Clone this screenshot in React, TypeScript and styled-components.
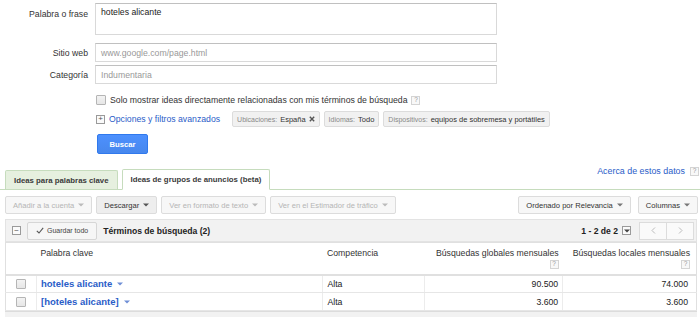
import React from 'react';
import styled, { createGlobalStyle } from 'styled-components';

const GlobalStyle = createGlobalStyle`
  body {
    margin: 0;
    background: #fff;
    font-family: "Liberation Sans", Arial, sans-serif;
    color: #222;
  }
`;

const Page = styled.div`
  width: 700px;
  height: 317px;
  overflow: hidden;
  font-size: 8.7px;
`;

const Form = styled.div`
  display: flex;
  flex-direction: column;
  padding-top: 3px;
`;

const FieldRow = styled.div<{ $top?: number; $align?: string }>`
  display: flex;
  align-items: ${p => p.$align || 'center'};
  gap: 7px;
  margin-top: ${p => p.$top || 0}px;
`;

const Label = styled.label<{ $pad?: number }>`
  width: 88px;
  text-align: right;
  color: #333;
  padding-top: ${p => p.$pad || 0}px;
  font-size: 8.7px;
`;

const Box = styled.div<{ $h: number; $muted?: boolean }>`
  box-sizing: border-box;
  width: 402px;
  height: ${p => p.$h}px;
  border: 1px solid #d9d9d9;
  border-top-color: #c0c0c0;
  padding: 3px 5px;
  color: ${p => (p.$muted ? '#999' : '#222')};
  font-size: 8.7px;
  display: flex;
  align-items: ${p => (p.$h > 25 ? 'flex-start' : 'center')};
`;

const OptionRow = styled.div<{ $top: number }>`
  display: flex;
  align-items: center;
  margin-left: 96px;
  margin-top: ${p => p.$top}px;
  gap: 4px;
  font-size: 8.7px;
  color: #333;
`;

const Check = styled.span<{ $size?: number }>`
  display: inline-block;
  box-sizing: border-box;
  width: ${p => p.$size || 10}px;
  height: ${p => p.$size || 10}px;
  border: 1px solid #b5b5b5;
  border-radius: 1px;
  background: linear-gradient(#f3f3f3, #e6e6e6);
  flex-shrink: 0;
`;

const Help = styled.span`
  display: inline-flex;
  align-items: center;
  justify-content: center;
  box-sizing: border-box;
  width: 9px;
  height: 9px;
  border: 1px solid #d4d4d4;
  background: #f8f8f8;
  color: #999;
  font-size: 6.5px;
  line-height: 1;
`;

const SquareIcon = styled.span<{ $gap?: number }>`
  display: inline-flex;
  align-items: center;
  justify-content: center;
  box-sizing: border-box;
  width: 9px;
  height: 9px;
  margin-left: ${p => p.$gap || 0}px;
  border: 1px solid #9a9a9a;
  background: #fafafa;
  color: #555;
  font-size: 8px;
  line-height: 1;
`;

const Link = styled.a<{ $size?: number; $bold?: boolean }>`
  color: #2a5dc8;
  text-decoration: none;
  font-size: ${p => p.$size || 8.7}px;
  font-weight: ${p => (p.$bold ? 'bold' : 'normal')};
`;

const Chips = styled.div`
  display: flex;
  gap: 4px;
  margin-left: 8px;
`;

const Chip = styled.span`
  display: inline-flex;
  align-items: center;
  gap: 3px;
  height: 16px;
  box-sizing: border-box;
  padding: 0 4px;
  background: #f1f1f1;
  border: 1px solid #dcdcdc;
  border-radius: 2px;
  font-size: 7px;
  color: #888;
  b {
    font-weight: normal;
    font-size: 7.5px;
    color: #333;
  }
`;

const SearchButton = styled.button`
  margin: 7px 0 0 97px;
  width: 51px;
  height: 20px;
  border: 1px solid #3079ed;
  border-radius: 2px;
  background: linear-gradient(#4d90fe, #4787ed);
  color: #fff;
  font-family: inherit;
  font-weight: bold;
  font-size: 7.7px;
  padding: 0;
`;

const TabBar = styled.div`
  display: flex;
  align-items: flex-end;
  margin-top: 15px;
  padding: 0 1px 0 5px;
  border-bottom: 1px solid #c6dcbd;
  height: 20px;
`;

const Tab = styled.div<{ $active?: boolean }>`
  box-sizing: border-box;
  height: ${p => (p.$active ? 21 : 19)}px;
  margin-bottom: ${p => (p.$active ? -1 : 0)}px;
  margin-right: 4px;
  padding: 0 8px;
  display: flex;
  align-items: center;
  font-size: 7.8px;
  font-weight: bold;
  color: #3a3a3a;
  border: 1px solid #c6dcbd;
  border-bottom: ${p => (p.$active ? '1px solid #fff' : 'none')};
  background: ${p => (p.$active ? '#fff' : '#e6f0df')};
  border-radius: 2px 2px 0 0;
`;

const AboutLink = styled.div`
  margin-left: auto;
  align-self: flex-start;
  margin-top: -3px;
  display: flex;
  align-items: center;
  gap: 5px;
`;

const Toolbar = styled.div`
  display: flex;
  align-items: center;
  gap: 4px;
  margin: 6px 2px 0 5px;
`;

const ToolButton = styled.button<{ $disabled?: boolean; $pressed?: boolean; $gap?: number }>`
  display: inline-flex;
  align-items: center;
  gap: 4px;
  height: 18px;
  padding: 0 7px;
  margin-left: ${p => p.$gap || 0}px;
  border: 1px solid #dcdcdc;
  border-radius: 2px;
  background: ${p => (p.$pressed ? '#eeeeee' : '#f7f7f7')};
  color: ${p => (p.$disabled ? '#b5b5b5' : '#333')};
  font-family: inherit;
  font-size: 7.6px;
`;

const Spacer = styled.div`
  flex: 1;
`;

const PanelHeader = styled.div`
  display: flex;
  align-items: center;
  margin: 5px 3px 0 5px;
  height: 23px;
  box-sizing: border-box;
  padding: 0 2px 0 6px;
  background: #f2f2f2;
  border: 1px solid #e3e3e3;
`;

const SaveButton = styled.button`
  display: inline-flex;
  align-items: center;
  gap: 3px;
  height: 18px;
  margin: 0 6px 0 6px;
  padding: 0 8px;
  border: 1px solid #d6d6d6;
  border-radius: 2px;
  background: #f6f6f6;
  color: #444;
  font-family: inherit;
  font-size: 7px;
`;

const Title = styled.span<{ $size?: number }>`
  font-weight: bold;
  font-size: ${p => p.$size || 8.6}px;
  color: #222;
`;

const Pager = styled.div`
  display: flex;
  margin-left: 9px;
`;

const PageButton = styled.button`
  display: inline-flex;
  align-items: center;
  justify-content: center;
  width: 28px;
  height: 18px;
  margin-left: -1px;
  border: 1px solid #dcdcdc;
  background: #fafafa;
  padding: 0;
`;

const Table = styled.table`
  border-collapse: collapse;
  margin-left: 5px;
  width: 692px;
  font-size: 8.7px;
`;

const Th = styled.th<{ $w: number; $num?: boolean }>`
  width: ${p => p.$w}px;
  height: 32px;
  box-sizing: border-box;
  padding: 5px 4px 0;
  vertical-align: top;
  text-align: ${p => (p.$num ? 'right' : 'left')};
  font-weight: normal;
  color: #333;
  border-bottom: 2px solid #e0e0e0;
  border-top: 1px solid #e0e0e0;
  &:first-child {
    border-left: 1px solid #e0e0e0;
  }
  &:last-child {
    border-right: 1px solid #e0e0e0;
    padding-right: 6px;
  }
`;

const HeadHelp = styled.div`
  display: flex;
  justify-content: flex-end;
  margin-top: 2px;
`;

const Td = styled.td<{ $num?: boolean; $line?: boolean }>`
  height: 18px;
  box-sizing: border-box;
  padding: 0 4px;
  text-align: ${p => (p.$num ? 'right' : 'left')};
  color: #222;
  border-bottom: 1px solid #e6e6e6;
  border-left: ${p => (p.$line ? '1px solid #ececec' : 'none')};
  &:first-child {
    border-left: 1px solid #e0e0e0;
    text-align: center;
  }
  &:last-child {
    border-right: 1px solid #e0e0e0;
    padding-right: 8px;
  }
`;

const KeywordCell = styled.span`
  display: inline-flex;
  align-items: center;
  gap: 5px;
`;

const Footer = styled.div`
  margin: 0 3px 0 5px;
  height: 10px;
  background: #f2f2f2;
  border-top: 1px solid #dcdcdc;
`;

const Caret = ({ color = '#777' }: { color?: string }) => (
  <svg width="6" height="4" viewBox="0 0 6 4">
    <path d="M0 0.5 L6 0.5 L3 3.5 Z" fill={color} />
  </svg>
);

const Chevron = ({ dir }: { dir: 'left' | 'right' }) => (
  <svg width="5" height="7" viewBox="0 0 5 7">
    <path
      d={dir === 'left' ? 'M4 0.5 L1 3.5 L4 6.5' : 'M1 0.5 L4 3.5 L1 6.5'}
      stroke="#bbb"
      strokeWidth="1"
      fill="none"
    />
  </svg>
);

const CheckMark = () => (
  <svg width="8" height="7" viewBox="0 0 8 7">
    <path d="M0.8 3.8 L3 6 L7.2 0.8" stroke="#555" strokeWidth="1.1" fill="none" />
  </svg>
);

const Cross = () => (
  <svg width="6" height="6" viewBox="0 0 6 6">
    <path d="M0.8 0.8 L5.2 5.2 M5.2 0.8 L0.8 5.2" stroke="#555" strokeWidth="1.4" />
  </svg>
);

const rows = [
  { kw: 'hoteles alicante', comp: 'Alta', global: '90.500', local: '74.000' },
  { kw: '[hoteles alicante]', comp: 'Alta', global: '3.600', local: '3.600' },
];

const App: React.FC = () => {
  return (
    <Page>
      <GlobalStyle />
      <Form>
        <FieldRow $align="flex-start">
          <Label $pad={6}>Palabra o frase</Label>
          <Box $h={32}>hoteles alicante</Box>
        </FieldRow>
        <FieldRow $top={8}>
          <Label>Sitio web</Label>
          <Box $h={19} $muted>www.google.com/page.html</Box>
        </FieldRow>
        <FieldRow $top={3}>
          <Label>Categoría</Label>
          <Box $h={19} $muted>Indumentaria</Box>
        </FieldRow>
        <OptionRow $top={11}>
          <Check />
          <span>Solo mostrar ideas directamente relacionadas con mis términos de búsqueda</span>
          <Help>?</Help>
        </OptionRow>
        <OptionRow $top={6}>
          <SquareIcon>+</SquareIcon>
          <Link>Opciones y filtros avanzados</Link>
          <Chips>
            <Chip>
              Ubicaciones:<b>España</b> <Cross />
            </Chip>
            <Chip>
              Idiomas:<b>Todo</b>
            </Chip>
            <Chip>
              Dispositivos: <b>equipos de sobremesa y portátiles</b>
            </Chip>
          </Chips>
        </OptionRow>
        <SearchButton>Buscar</SearchButton>
      </Form>

      <TabBar>
        <Tab>Ideas para palabras clave</Tab>
        <Tab $active>Ideas de grupos de anuncios (beta)</Tab>
        <AboutLink>
          <Link $size={8.9}>Acerca de estos datos</Link>
          <Help>?</Help>
        </AboutLink>
      </TabBar>

      <Toolbar>
        <ToolButton $disabled>
          Añadir a la cuenta <Caret color="#bbb" />
        </ToolButton>
        <ToolButton $pressed>
          Descargar <Caret color="#555" />
        </ToolButton>
        <ToolButton $disabled>
          Ver en formato de texto <Caret color="#bbb" />
        </ToolButton>
        <ToolButton $disabled>
          Ver en el Estimador de tráfico <Caret color="#bbb" />
        </ToolButton>
        <Spacer />
        <ToolButton>
          Ordenado por Relevancia <Caret />
        </ToolButton>
        <ToolButton $gap={3}>
          Columnas <Caret />
        </ToolButton>
      </Toolbar>

      <PanelHeader>
        <SquareIcon>−</SquareIcon>
        <SaveButton>
          <CheckMark /> Guardar todo
        </SaveButton>
        <Title>Términos de búsqueda (2)</Title>
        <Spacer />
        <Title>1 - 2 de 2</Title>
        <SquareIcon $gap={4}>
          <Caret color="#444" />
        </SquareIcon>
        <Pager>
          <PageButton>
            <Chevron dir="left" />
          </PageButton>
          <PageButton>
            <Chevron dir="right" />
          </PageButton>
        </Pager>
      </PanelHeader>

      <Table>
        <thead>
          <tr>
            <Th $w={31}></Th>
            <Th $w={287}>Palabra clave</Th>
            <Th $w={102}>Competencia</Th>
            <Th $w={138} $num>
              Búsquedas globales mensuales
              <HeadHelp>
                <Help>?</Help>
              </HeadHelp>
            </Th>
            <Th $w={134} $num>
              Búsquedas locales mensuales
              <HeadHelp>
                <Help>?</Help>
              </HeadHelp>
            </Th>
          </tr>
        </thead>
        <tbody>
          {rows.map(r => (
            <tr key={r.kw}>
              <Td>
                <Check style={{ verticalAlign: 'middle' }} />
              </Td>
              <Td $line>
                <KeywordCell>
                  <Link $size={9.5} $bold>
                    {r.kw}
                  </Link>
                  <Caret color="#6f8fd6" />
                </KeywordCell>
              </Td>
              <Td $line>{r.comp}</Td>
              <Td $num $line>
                {r.global}
              </Td>
              <Td $num $line>
                {r.local}
              </Td>
            </tr>
          ))}
        </tbody>
      </Table>
      <Footer />
    </Page>
  );
};

export default App;
